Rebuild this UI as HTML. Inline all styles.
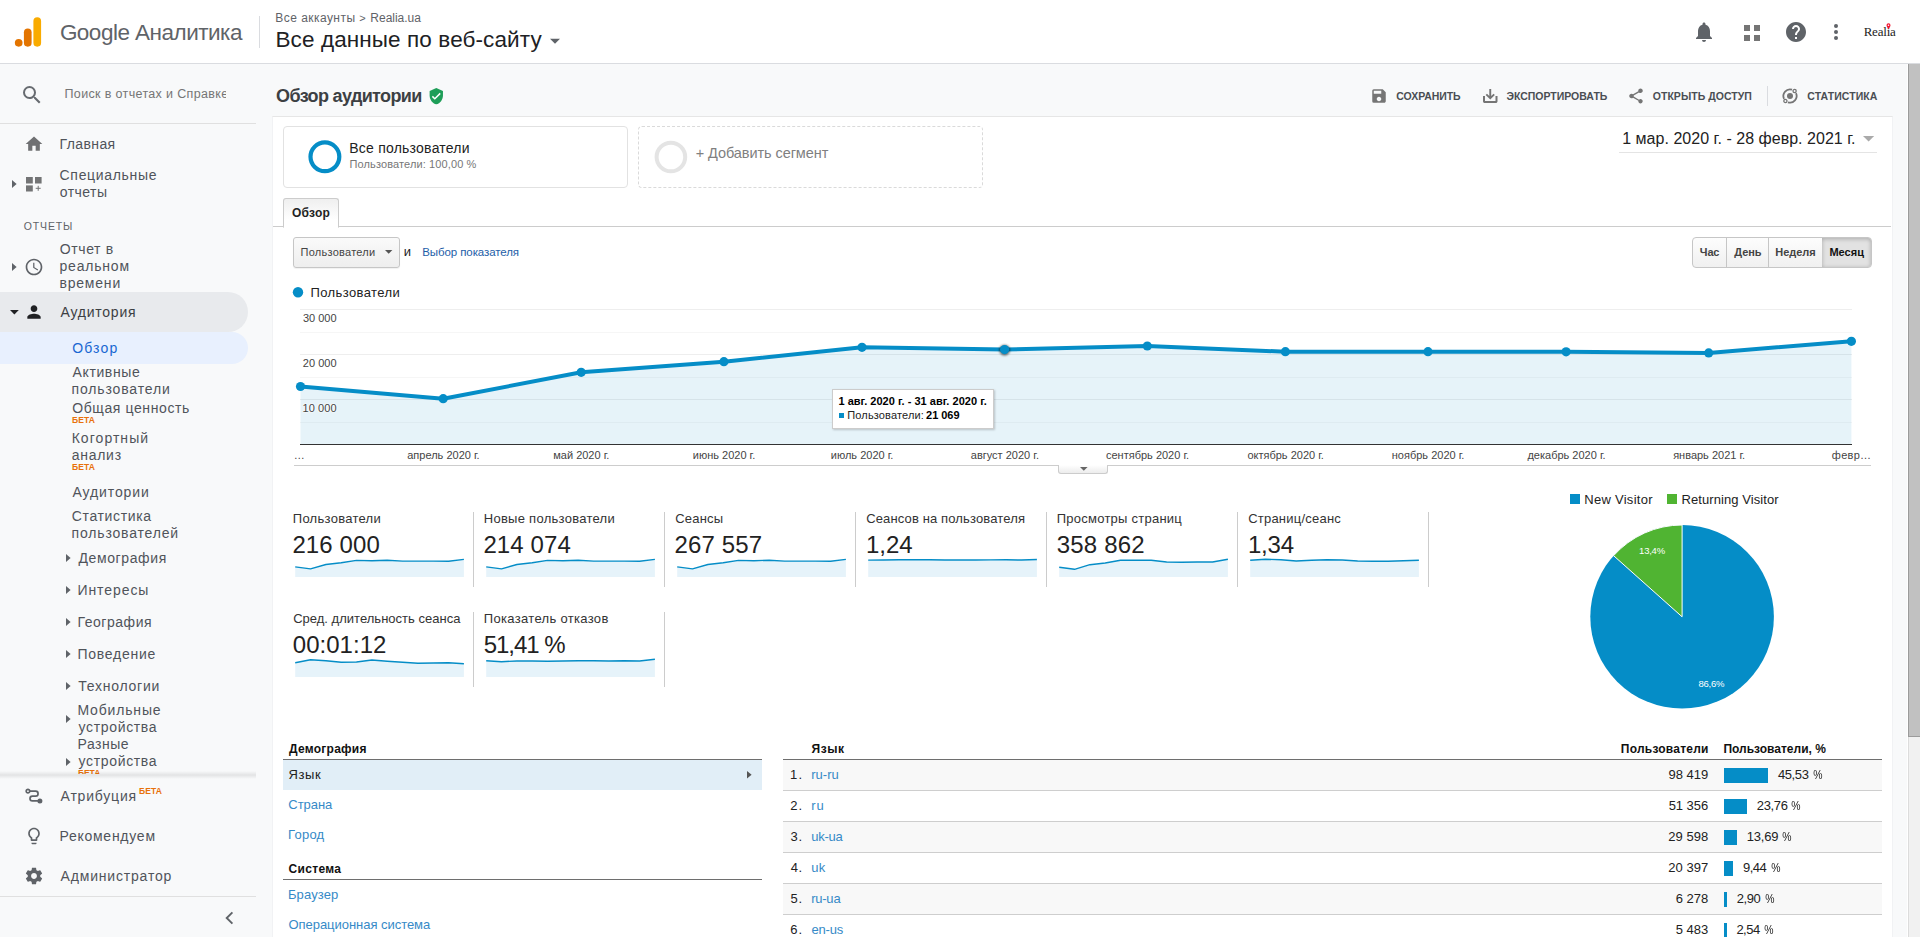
<!DOCTYPE html>
<html lang="ru">
<head>
<meta charset="utf-8">
<title>Обзор аудитории – Google Аналитика</title>
<style>
html,body{margin:0;padding:0;}
body{width:1920px;height:937px;overflow:hidden;position:relative;background:#f8f9fa;font-family:"Liberation Sans",sans-serif;color:#222;font-size:12px;}
.abs,.t{position:absolute;white-space:nowrap;}
.t{line-height:1;}
svg{position:absolute;overflow:visible;}
#hdr{position:absolute;left:0;top:0;width:1920px;height:63px;background:#fff;border-bottom:1px solid #dadce0;}
#panel{position:absolute;left:272px;top:116px;width:1621px;height:830px;background:#fff;border:1px solid #f1f2f4;border-top-color:#e6e6e6;box-sizing:border-box;}
#sbar{position:absolute;left:1907px;top:64px;width:13px;height:873px;background:#f1f1f1;border-left:1px solid #fff;box-shadow:inset 1px 0 0 #dcdcdc;box-sizing:border-box;}
#sthumb{position:absolute;left:1908px;top:64px;width:12px;height:673px;background:#c1c1c1;border-left:1px solid #9b9b9b;border-bottom:1px solid #9b9b9b;box-sizing:border-box;}
</style>
</head>
<body>
<div id="hdr"></div>
<div id="panel"></div>
<div id="sbar"></div><div id="sthumb"></div>
<!-- sec_header -->
<svg style="left:0px;top:0px;" width="60" height="63" viewBox="0 0 60 63"><circle cx="18.7" cy="42.8" r="3.85" fill="#e37400"/><rect x="23.9" y="28.4" width="7.7" height="18.3" rx="3.85" fill="#e37400"/><rect x="33.4" y="17.2" width="7.7" height="29.5" rx="3.85" fill="#f9ab00"/></svg>
<div class="t" id="gname" style="left:59.88px;top:22.00px;font-size:22.5px;letter-spacing:-0.508px;color:#5f6368;">Google Аналитика</div>
<div class="abs" style="left:259px;top:16px;width:1px;height:32px;background:#dadce0;"></div>
<div class="t" id="crumb" style="left:275.34px;top:12.00px;font-size:12px;letter-spacing:0.449px;color:#5f6368;">Все аккаунты</div>
<div class="t" id="crumbsep" style="left:359.31px;top:13.00px;font-size:11px;color:#5f6368;">&gt;</div>
<div class="t" id="crumb2" style="left:370.34px;top:12.00px;font-size:12px;letter-spacing:-0.012px;color:#5f6368;">Realia.ua</div>
<div class="t" id="prop" style="left:275.50px;top:29.00px;font-size:22.5px;letter-spacing:0.103px;color:#202124;">Все данные по веб-сайту</div>
<svg style="left:548.5px;top:37.6px;" width="12" height="6" viewBox="0 0 12 6"><path d="M1 .8h10L6 5.8z" fill="#5f6368"/></svg>
<svg style="left:1692px;top:20px;" width="24" height="24" viewBox="0 0 24 24"><path fill="#5f6368" d="M12 22c1.1 0 2-.9 2-2h-4a2 2 0 0 0 2 2zm6-6v-5c0-3.07-1.64-5.64-4.5-6.32V4c0-.83-.67-1.5-1.5-1.5S10.5 3.17 10.5 4v.68C7.63 5.36 6 7.92 6 11v5l-2 2v1h16v-1l-2-2z"/></svg>
<svg style="left:1744px;top:25px;" width="16" height="16" viewBox="0 0 16 16"><g fill="#757575"><rect x="0" y="0" width="6" height="6"/><rect x="10" y="0" width="6" height="6"/><rect x="0" y="10" width="6" height="6"/><rect x="10" y="10" width="6" height="6"/></g></svg>
<svg style="left:1784px;top:20px;" width="24" height="24" viewBox="0 0 24 24"><path fill="#5f6368" d="M12 2C6.48 2 2 6.48 2 12s4.48 10 10 10 10-4.48 10-10S17.52 2 12 2zm1 17h-2v-2h2v2zm2.07-7.750l-.9.92C13.45 12.9 13 13.5 13 15h-2v-.5c0-1.1.45-2.1 1.17-2.83l1.240-1.260c.37-.36.59-.86.59-1.410 0-1.1-.9-2-2-2s-2 .9-2 2H8c0-2.210 1.790-4 4-4s4 1.790 4 4c0 .88-.36 1.680-.93 2.250z"/></svg>
<svg style="left:1824px;top:20px;" width="24" height="24" viewBox="0 0 24 24"><g fill="#5f6368"><circle cx="12" cy="6" r="2"/><circle cx="12" cy="12" r="2"/><circle cx="12" cy="18" r="2"/></g></svg>
<div class="t" id="realia" style="left:1863.67px;top:25.00px;font-size:13px;letter-spacing:-0.212px;color:#222;font-family:'Liberation Serif',serif;">Realia</div>
<svg style="left:1886px;top:23.3px;" width="5" height="7" viewBox="0 0 5 7"><path d="M2.5 .3a2 2 0 0 1 2 2c0 1.4-2 3.8-2 3.8s-2-2.4-2-3.8a2 2 0 0 1 2-2z" fill="#f0142f"/><circle cx="2.5" cy="2.3" r=".8" fill="#fff"/></svg>
<!-- sec_side -->
<svg style="left:20px;top:83px;" width="24" height="24" viewBox="0 0 24 24"><path fill="#676b70" d="M15.5 14h-.79l-.28-.27A6.471 6.471 0 0 0 16 9.5 6.5 6.5 0 1 0 9.5 16c1.610 0 3.090-.59 4.230-1.570l.27.28v.79l5 4.990L20.490 19l-4.990-5zm-6 0C7.010 14 5 11.990 5 9.500S7.010 5 9.500 5 14 7.010 14 9.500 11.990 14 9.500 14z"/></svg>
<div class="abs" style="left:60px;top:80px;width:165.7px;height:26px;overflow:hidden;"><div class="t" id="srch" style="left:4.50px;top:8.00px;font-size:12.5px;letter-spacing:0.350px;color:#757575;">Поиск в отчетах и Справке</div>
</div>
<div class="abs" style="left:0px;top:123px;width:256px;height:1px;background:#e0e0e0;"></div>
<svg style="left:24px;top:134px;" width="20" height="20" viewBox="0 0 24 24"><path fill="#6f7072" d="M10 20v-6h4v6h5v-8h3L12 3 2 12h3v8z"/></svg>
<div class="t" id="n_home" style="left:59.58px;top:137.00px;font-size:14px;letter-spacing:0.377px;color:#50545a;">Главная</div>
<svg style="left:12.1px;top:180.1px;" width="5" height="8" viewBox="0 0 5 8"><path d="M0 0L4.6 4 0 8z" fill="#5f6368"/></svg>
<svg style="left:26.2px;top:176.7px;" width="16" height="15" viewBox="0 0 16 15"><g fill="#737475"><rect x="0" y="0" width="6.8" height="6.5"/><rect x="9" y="0" width="6.6" height="6.5"/><rect x="0" y="8.400" width="6.8" height="6.1"/><rect x="11.700" y="8.800" width="1" height="5"/><rect x="9.700" y="10.800" width="5" height="1"/></g></svg>
<div class="t" id="n_spec" style="left:59.60px;top:168.00px;font-size:14px;letter-spacing:0.670px;color:#50545a;">Специальные</div>
<div class="t" style="left:59.74px;top:185.00px;font-size:14px;letter-spacing:0.450px;color:#50545a;">отчеты</div>
<div class="t" style="left:23.63px;top:221.00px;font-size:10.5px;letter-spacing:0.900px;color:#5f6368;">ОТЧЕТЫ</div>
<svg style="left:12.1px;top:263.2px;" width="5" height="8" viewBox="0 0 5 8"><path d="M0 0L4.6 4 0 8z" fill="#5f6368"/></svg>
<svg style="left:24px;top:257px;" width="20" height="20" viewBox="0 0 24 24"><path fill="#5f6368" d="M11.990 2C6.470 2 2 6.480 2 12s4.470 10 9.990 10C17.520 22 22 17.520 22 12S17.520 2 11.990 2zM12 20c-4.420 0-8-3.580-8-8s3.580-8 8-8 8 3.580 8 8-3.580 8-8 8zm.5-13H11v6l5.250 3.150.75-1.230-4.500-2.670z"/></svg>
<div class="t" style="left:59.67px;top:242.00px;font-size:14px;letter-spacing:0.627px;color:#50545a;">Отчет в</div>
<div class="t" style="left:59.46px;top:259.00px;font-size:14px;letter-spacing:0.806px;color:#50545a;">реальном</div>
<div class="t" style="left:59.39px;top:276.00px;font-size:14px;letter-spacing:0.815px;color:#50545a;">времени</div>
<div class="abs" style="left:0px;top:292px;width:248px;height:40px;background:#e8eaed;border-radius:0 20px 20px 0;"></div>
<svg style="left:9.5px;top:310px;" width="9" height="4.5" viewBox="0 0 9 4.5"><path d="M0 0h8.800L4.400 4.400z" fill="#202124"/></svg>
<svg style="left:24px;top:302px;" width="20" height="20" viewBox="0 0 24 24"><path fill="#202124" d="M12 12c2.210 0 4-1.790 4-4s-1.790-4-4-4-4 1.790-4 4 1.790 4 4 4zm0 2c-2.670 0-8 1.340-8 4v2h16v-2c0-2.660-5.330-4-8-4z"/></svg>
<div class="t" style="left:60.60px;top:305.00px;font-size:14px;letter-spacing:0.754px;color:#3c4043;">Аудитория</div>
<div class="abs" style="left:0px;top:332px;width:248px;height:32px;background:#e8f0fe;border-radius:0 16px 16px 0;"></div>
<div class="t" id="n_obz" style="left:72.17px;top:341.00px;font-size:14px;letter-spacing:1.150px;color:#1967d2;">Обзор</div>
<div class="t" style="left:72.50px;top:365.00px;font-size:14px;letter-spacing:0.629px;color:#50545a;">Активные</div>
<div class="t" style="left:71.59px;top:382.00px;font-size:14px;letter-spacing:0.845px;color:#50545a;">пользователи</div>
<div class="t" style="left:72.17px;top:401.00px;font-size:14px;letter-spacing:0.609px;color:#50545a;">Общая ценность</div>
<div class="t" style="left:71.95px;top:416.00px;font-size:8.5px;letter-spacing:0.118px;color:#e8710a;font-weight:bold;">БЕТА</div>
<div class="t" style="left:71.68px;top:431.00px;font-size:14px;letter-spacing:1.045px;color:#50545a;">Когортный</div>
<div class="t" style="left:71.74px;top:448.00px;font-size:14px;letter-spacing:0.728px;color:#50545a;">анализ</div>
<div class="t" style="left:71.95px;top:463.00px;font-size:8.5px;letter-spacing:0.118px;color:#e8710a;font-weight:bold;">БЕТА</div>
<div class="t" style="left:72.50px;top:485.00px;font-size:14px;letter-spacing:0.890px;color:#50545a;">Аудитории</div>
<div class="t" style="left:71.80px;top:509.00px;font-size:14px;letter-spacing:0.637px;color:#50545a;">Статистика</div>
<div class="t" style="left:71.59px;top:526.00px;font-size:14px;letter-spacing:0.827px;color:#50545a;">пользователей</div>
<svg style="left:66.2px;top:554.1px;" width="5" height="8" viewBox="0 0 5 8"><path d="M0 0L4.6 4 0 8z" fill="#5f6368"/></svg>
<div class="t" style="left:78.53px;top:551.00px;font-size:14px;letter-spacing:0.603px;color:#50545a;">Демография</div>
<svg style="left:66.2px;top:586.1px;" width="5" height="8" viewBox="0 0 5 8"><path d="M0 0L4.6 4 0 8z" fill="#5f6368"/></svg>
<div class="t" style="left:77.48px;top:583.00px;font-size:14px;letter-spacing:0.919px;color:#50545a;">Интересы</div>
<svg style="left:66.2px;top:618.1px;" width="5" height="8" viewBox="0 0 5 8"><path d="M0 0L4.6 4 0 8z" fill="#5f6368"/></svg>
<div class="t" style="left:77.48px;top:615.00px;font-size:14px;letter-spacing:0.543px;color:#50545a;">География</div>
<svg style="left:66.2px;top:650.1px;" width="5" height="8" viewBox="0 0 5 8"><path d="M0 0L4.6 4 0 8z" fill="#5f6368"/></svg>
<div class="t" style="left:77.48px;top:647.00px;font-size:14px;letter-spacing:0.749px;color:#50545a;">Поведение</div>
<svg style="left:66.2px;top:682.1px;" width="5" height="8" viewBox="0 0 5 8"><path d="M0 0L4.6 4 0 8z" fill="#5f6368"/></svg>
<div class="t" style="left:78.32px;top:679.00px;font-size:14px;letter-spacing:0.747px;color:#50545a;">Технологии</div>
<svg style="left:66.1px;top:715.4px;" width="5" height="8" viewBox="0 0 5 8"><path d="M0 0L4.6 4 0 8z" fill="#5f6368"/></svg>
<div class="t" style="left:77.48px;top:703.00px;font-size:14px;letter-spacing:0.830px;color:#50545a;">Мобильные</div>
<div class="t" style="left:78.60px;top:720.00px;font-size:14px;letter-spacing:0.648px;color:#50545a;">устройства</div>
<div class="t" style="left:77.48px;top:737.00px;font-size:14px;letter-spacing:0.534px;color:#50545a;">Разные</div>
<svg style="left:66.1px;top:758.1px;" width="5" height="8" viewBox="0 0 5 8"><path d="M0 0L4.6 4 0 8z" fill="#5f6368"/></svg>
<div class="t" style="left:78.60px;top:754.00px;font-size:14px;letter-spacing:0.648px;color:#50545a;">устройства</div>
<div class="abs" style="left:70px;top:766px;width:60px;height:8px;overflow:hidden;"><div class="t" style="left:8.05px;top:3.00px;font-size:8.5px;letter-spacing:-0.115px;color:#e8710a;font-weight:bold;">БЕТА</div>
</div>
<div class="abs" style="left:0;top:774px;width:256px;height:163px;background:#f8f9fa;"></div>
<div class="abs" style="left:0;top:771px;width:256px;height:8px;background:linear-gradient(rgba(0,0,0,0),rgba(0,0,0,.085) 50%,rgba(0,0,0,0));"></div>
<svg style="left:24px;top:786px;" width="20" height="20" viewBox="0 0 20 20"><g fill="none" stroke="#5f6368" stroke-width="1.700"><circle cx="3.950" cy="5.200" r="1.750"/><path d="M5.800 5.200h5.800a2.450 2.450 0 0 1 0 4.900h-3.200a2.400 2.400 0 0 0 0 4.800h5" stroke-linecap="round"/></g><circle cx="15.900" cy="14.900" r="2.500" fill="#5f6368"/></svg>
<div class="t" style="left:60.60px;top:789.00px;font-size:14px;letter-spacing:0.794px;color:#50545a;">Атрибуция</div>
<div class="t" style="left:139.05px;top:787.00px;font-size:8.5px;letter-spacing:0.085px;color:#e8710a;font-weight:bold;">БЕТА</div>
<svg style="left:24px;top:826px;" width="20" height="20" viewBox="0 0 24 24"><path fill="#5f6368" d="M9 21c0 .55.45 1 1 1h4c.55 0 1-.45 1-1v-1H9v1zm3-19C8.140 2 5 5.140 5 9c0 2.380 1.190 4.470 3 5.740V17c0 .55.45 1 1 1h6c.55 0 1-.45 1-1v-2.260c1.810-1.270 3-3.360 3-5.740 0-3.860-3.140-7-7-7zm2.850 11.100l-.85.6V16h-4v-2.300l-.85-.6A4.997 4.997 0 0 1 7 9c0-2.760 2.240-5 5-5s5 2.240 5 5c0 1.630-.8 3.160-2.150 4.100z"/></svg>
<div class="t" style="left:59.48px;top:829.00px;font-size:14px;letter-spacing:0.740px;color:#50545a;">Рекомендуем</div>
<svg style="left:24px;top:866px;" width="20" height="20" viewBox="0 0 24 24"><path fill="#5f6368" d="M19.430 12.980c.04-.32.07-.64.07-.98s-.03-.66-.07-.98l2.110-1.650c.19-.15.24-.42.12-.64l-2-3.460c-.12-.22-.39-.3-.61-.22l-2.490 1c-.52-.4-1.080-.73-1.690-.98l-.38-2.650C14.460 2.180 14.250 2 14 2h-4c-.25 0-.46.18-.49.42l-.38 2.650c-.61.25-1.170.59-1.690.98l-2.490-1c-.23-.09-.49 0-.61.22l-2 3.460c-.13.22-.07.49.12.64l2.110 1.650c-.04.32-.07.65-.07.98s.03.66.07.98l-2.110 1.650c-.19.15-.24.42-.12.64l2 3.460c.12.22.39.3.61.22l2.490-1c.52.4 1.080.73 1.690.98l.38 2.650c.03.24.24.42.49.42h4c.25 0 .46-.18.490-.42l.38-2.650c.61-.25 1.170-.59 1.690-.98l2.490 1c.23.09.49 0 .61-.22l2-3.460c.12-.22.07-.49-.12-.64l-2.110-1.650zM12 15.500c-1.930 0-3.500-1.570-3.500-3.500s1.570-3.500 3.500-3.500 3.500 1.570 3.500 3.500-1.570 3.500-3.500 3.500z"/></svg>
<div class="t" style="left:60.60px;top:869.00px;font-size:14px;letter-spacing:0.812px;color:#50545a;">Администратор</div>
<div class="abs" style="left:0px;top:896px;width:256px;height:1px;background:#e0e0e0;"></div>
<svg style="left:225px;top:911px;" width="9" height="14" viewBox="0 0 9 14"><path d="M7.400 1.300L1.700 7l5.700 5.700" fill="none" stroke="#5f6368" stroke-width="1.900"/></svg>
<!-- sec_title -->
<div class="t" id="title" style="left:276.08px;top:87.00px;font-size:18px;letter-spacing:-0.641px;color:#3c4043;font-weight:bold;">Обзор аудитории</div>
<svg style="left:428.9px;top:87.6px;" width="14.6" height="16.3" viewBox="3 1 18 22"><path d="M12 1L3 5v6c0 5.550 3.840 10.740 9 12 5.160-1.260 9-6.450 9-12V5l-9-4z" fill="#1e9e58"/><path d="M10 17l-4-4 1.410-1.410L10 14.170l6.590-6.590L18 9l-8 8z" fill="#fff"/></svg>
<svg style="left:1370px;top:87px;" width="18" height="18" viewBox="0 0 24 24"><path fill="#757575" d="M17 3H5a2 2 0 0 0-2 2v14a2 2 0 0 0 2 2h14c1.100 0 2-.9 2-2V7l-4-4zm-5 16c-1.660 0-3-1.340-3-3s1.340-3 3-3 3 1.340 3 3-1.340 3-3 3zm3-10H5V5h10v4z"/></svg>
<div class="t" style="left:1396.18px;top:91.00px;font-size:10.5px;letter-spacing:-0.044px;color:#4a4e53;font-weight:bold;">СОХРАНИТЬ</div>
<svg style="left:1482.7px;top:89px;" width="14.5" height="14" viewBox="0 0 14.5 14"><g fill="none" stroke="#757575"><path d="M7.250 0v8.800M3.300 5.400l3.950 3.800 3.950-3.800" stroke-width="1.900"/><path d="M1 7v5.300a.7.700 0 0 0 .7.700h11.100a.7.700 0 0 0 .7-.7V7" stroke-width="2"/></g></svg>
<div class="t" style="left:1506.44px;top:91.00px;font-size:10.5px;letter-spacing:-0.006px;color:#4a4e53;font-weight:bold;">ЭКСПОРТИРОВАТЬ</div>
<svg style="left:1626.5px;top:86.8px;" width="18" height="18" viewBox="0 0 24 24"><path fill="#757575" d="M18 16.080c-.76 0-1.440.3-1.960.77L8.910 12.700c.05-.23.09-.46.09-.7s-.04-.47-.09-.7l7.050-4.110c.54.5 1.250.81 2.040.81 1.660 0 3-1.340 3-3s-1.340-3-3-3-3 1.340-3 3c0 .24.04.47.09.7L8.040 9.810C7.500 9.310 6.790 9 6 9c-1.660 0-3 1.340-3 3s1.340 3 3 3c.79 0 1.500-.31 2.040-.81l7.120 4.160c-.05.21-.08.43-.08.650 0 1.610 1.310 2.920 2.920 2.920 1.610 0 2.920-1.310 2.920-2.920s-1.310-2.920-2.920-2.920z"/></svg>
<div class="t" style="left:1652.78px;top:91.00px;font-size:10.5px;letter-spacing:0.035px;color:#4a4e53;font-weight:bold;">ОТКРЫТЬ ДОСТУП</div>
<div class="abs" style="left:1767px;top:86px;width:1px;height:20px;background:#dadce0;"></div>
<svg style="left:1782.3px;top:88.2px;" width="16" height="16" viewBox="0 0 16 16"><g fill="none" stroke="#757575" stroke-width="1.800"><path d="M2.020 10.790A6.600 6.600 0 0 1 10.040 1.720"/><path d="M13.980 5.210A6.600 6.600 0 0 1 5.960 14.280"/><circle cx="12.600" cy="3" r="1.600" stroke-width="1.300"/><circle cx="3.400" cy="13" r="1.600" stroke-width="1.300"/></g><circle cx="8" cy="8" r="3" fill="#757575"/></svg>
<div class="t" style="left:1807.28px;top:91.00px;font-size:10.5px;letter-spacing:0.086px;color:#4a4e53;font-weight:bold;">СТАТИСТИКА</div>
<!-- sec_seg -->
<div class="abs" style="left:283px;top:126px;width:343px;height:60px;border:1px solid #e2e2e2;border-radius:4px;background:#fff;"></div>
<svg style="left:306px;top:138px;" width="38" height="38" viewBox="0 0 38 38"><circle cx="18.900" cy="18.800" r="14.400" fill="none" stroke="#058dc7" stroke-width="4.200"/></svg>
<div class="t" id="seg1" style="left:349.28px;top:141.00px;font-size:14px;letter-spacing:0.227px;color:#222;">Все пользователи</div>
<div class="t" style="left:349.52px;top:159.00px;font-size:11px;letter-spacing:0.117px;color:#777;">Пользователи: 100,00 %</div>
<div class="abs" style="left:638px;top:126px;width:343px;height:60px;border:1px dashed #dadada;border-radius:4px;background:#fff;"></div>
<svg style="left:652px;top:138px;" width="38" height="38" viewBox="0 0 38 38"><circle cx="18.900" cy="19" r="14.300" fill="none" stroke="#e4e4e4" stroke-width="4"/></svg>
<div class="t" style="left:695.75px;top:146.00px;font-size:14.5px;letter-spacing:-0.079px;color:#808080;">+ Добавить сегмент</div>
<div class="t" id="date" style="left:1622.20px;top:131.00px;font-size:16px;letter-spacing:0.025px;color:#222;">1 мар. 2020 г. - 28 февр. 2021 г.</div>
<svg style="left:1862.6px;top:136.2px;" width="11.2" height="5.6" viewBox="0 0 11.2 5.6"><path d="M0 0h11.200L5.600 5.600z" fill="#aaa"/></svg>
<div class="abs" style="left:1619px;top:151.5px;width:258px;height:1.5px;background:#e4e4e4;"></div>
<!-- sec_chart -->
<div class="abs" style="left:273px;top:226px;width:1618px;height:1px;background:#ccc;"></div>
<div class="abs" style="left:283px;top:198px;width:54px;height:28px;border:1px solid #ccc;border-bottom:1px solid #fff;border-radius:3px 3px 0 0;background:linear-gradient(#efefef,#fff 75%);"></div>
<div class="t" id="tab" style="left:291.92px;top:207.00px;font-size:12px;letter-spacing:0.265px;color:#222;font-weight:bold;">Обзор</div>
<div class="abs" style="left:293px;top:237px;width:105px;height:29px;border:1px solid #c6c6c6;border-radius:3px;background:linear-gradient(#fafafa,#eee);box-shadow:0 1px 1px rgba(0,0,0,.06);"></div>
<div class="t" id="dd" style="left:300.52px;top:247.00px;font-size:11px;letter-spacing:0.256px;color:#444;">Пользователи</div>
<svg style="left:385px;top:250.3px;" width="7.4" height="3.8" viewBox="0 0 7.4 3.8"><path d="M0 0h7.400L3.700 3.800z" fill="#555"/></svg>
<div class="t" style="left:403.75px;top:245.00px;font-size:13px;color:#222;">и</div>
<div class="t" id="pick" style="left:422.28px;top:247.00px;font-size:11.5px;letter-spacing:-0.092px;color:#1d5ea8;">Выбор показателя</div>
<div class="abs" style="left:1692px;top:237px;width:178px;height:29px;border:1px solid #c6c6c6;border-radius:4px;background:linear-gradient(#fdfdfd,#f0f0f0);"></div>
<div class="abs" style="left:1822px;top:238px;width:49px;height:29px;border-radius:0 3px 3px 0;background:#e2e2e2;box-shadow:inset 0 1px 4px rgba(0,0,0,.25);"></div>
<div class="abs" style="left:1726px;top:238px;width:1px;height:29px;background:#c6c6c6;"></div>
<div class="abs" style="left:1768px;top:238px;width:1px;height:29px;background:#c6c6c6;"></div>
<div class="t" style="left:1699.85px;top:247.00px;font-size:11px;letter-spacing:-0.170px;color:#444;font-weight:bold;">Час</div>
<div class="t" style="left:1734.35px;top:247.00px;font-size:11px;letter-spacing:-0.135px;color:#444;font-weight:bold;">День</div>
<div class="t" style="left:1775.19px;top:247.00px;font-size:11px;color:#444;font-weight:bold;">Неделя</div>
<div class="t" style="left:1829.38px;top:247.00px;font-size:11px;letter-spacing:0.035px;color:#111;font-weight:bold;">Месяц</div>
<svg style="left:292px;top:286px;" width="12" height="12" viewBox="0 0 12 12"><circle cx="6" cy="6.200" r="5.200" fill="#058dc7"/></svg>
<div class="t" id="leg" style="left:310.56px;top:286.00px;font-size:13px;letter-spacing:0.387px;color:#222;">Пользователи</div>
<svg style="left:0px;top:0px;" width="1920" height="480" viewBox="0 0 1920 480"><defs><filter id="blr" x="-50%" y="-50%" width="200%" height="200%"><feGaussianBlur stdDeviation="1"/></filter></defs><rect x="300" y="309" width="1552" height="1" fill="#eeeeee"/><rect x="300" y="332" width="1552" height="1" fill="#f6f6f6"/><rect x="300" y="354" width="1552" height="1" fill="#eeeeee"/><rect x="300" y="377" width="1552" height="1" fill="#f6f6f6"/><rect x="300" y="399" width="1552" height="1" fill="#eeeeee"/><rect x="300" y="422" width="1552" height="1" fill="#f6f6f6"/><polygon points="300.5,386.5 443.2,398.7 581.2,372.3 723.9,361.7 862,347.3 1004.6,349.6 1147.3,346 1285.4,351.7 1428,351.7 1566.1,351.8 1708.7,352.9 1851.4,341.3 1851.4,444.500 300.5,444.500" fill="#058dc7" fill-opacity=".1"/><rect x="300" y="444" width="1552" height="1" fill="#333"/><polyline points="300.5,386.5 443.2,398.7 581.2,372.3 723.9,361.7 862,347.3 1004.6,349.6 1147.3,346 1285.4,351.7 1428,351.7 1566.1,351.8 1708.7,352.9 1851.4,341.3" fill="none" stroke="#058dc7" stroke-width="4" stroke-linejoin="round"/><circle cx="300.5" cy="386.5" r="4.600" fill="#058dc7"/><circle cx="443.2" cy="398.7" r="4.600" fill="#058dc7"/><circle cx="581.2" cy="372.3" r="4.600" fill="#058dc7"/><circle cx="723.9" cy="361.7" r="4.600" fill="#058dc7"/><circle cx="862" cy="347.3" r="4.600" fill="#058dc7"/><circle cx="1004.6" cy="350.1" r="5.400" fill="#000" fill-opacity=".55" filter="url(#blr)"/><circle cx="1004.6" cy="349.6" r="4.600" fill="#058dc7"/><circle cx="1147.3" cy="346" r="4.600" fill="#058dc7"/><circle cx="1285.4" cy="351.7" r="4.600" fill="#058dc7"/><circle cx="1428" cy="351.7" r="4.600" fill="#058dc7"/><circle cx="1566.1" cy="351.8" r="4.600" fill="#058dc7"/><circle cx="1708.7" cy="352.9" r="4.600" fill="#058dc7"/><circle cx="1851.4" cy="341.3" r="4.600" fill="#058dc7"/></svg>
<div class="t" style="left:302.92px;top:313.00px;font-size:11px;color:#444;text-shadow:0 0 2px #fff,0 0 2px #fff,0 0 2px #fff;">30 000</div>
<div class="t" style="left:302.75px;top:358.00px;font-size:11px;letter-spacing:0.035px;color:#444;text-shadow:0 0 2px #fff,0 0 2px #fff,0 0 2px #fff;">20 000</div>
<div class="t" style="left:302.48px;top:403.00px;font-size:11px;letter-spacing:0.090px;color:#444;text-shadow:0 0 2px #fff,0 0 2px #fff,0 0 2px #fff;">10 000</div>
<div class="t" style="left:293.81px;top:450.00px;font-size:11px;color:#444;">…</div>
<div class="t" id="xl1" style="left:407.26px;top:450.00px;font-size:11px;color:#444;">апрель 2020 г.</div>
<div class="t" id="xl2" style="left:553.26px;top:450.00px;font-size:11px;color:#444;">май 2020 г.</div>
<div class="t" id="xl3" style="left:692.77px;top:450.00px;font-size:11px;color:#444;">июнь 2020 г.</div>
<div class="t" id="xl4" style="left:830.81px;top:450.00px;font-size:11px;color:#444;">июль 2020 г.</div>
<div class="t" id="xl5" style="left:970.77px;top:450.00px;font-size:11px;color:#444;">август 2020 г.</div>
<div class="t" id="xl6" style="left:1105.99px;top:450.00px;font-size:11px;color:#444;">сентябрь 2020 г.</div>
<div class="t" id="xl7" style="left:1247.42px;top:450.00px;font-size:11px;color:#444;">октябрь 2020 г.</div>
<div class="t" id="xl8" style="left:1391.81px;top:450.00px;font-size:11px;color:#444;">ноябрь 2020 г.</div>
<div class="t" id="xl9" style="left:1527.46px;top:450.00px;font-size:11px;color:#444;">декабрь 2020 г.</div>
<div class="t" id="xl10" style="left:1673.14px;top:450.00px;font-size:11px;color:#444;">январь 2021 г.</div>
<div class="t" style="left:1831.86px;top:450.00px;font-size:11px;letter-spacing:0.252px;color:#444;">февр…</div>
<div class="abs" style="left:294px;top:465px;width:1577px;height:1px;background:#cdcdcd;"></div>
<div class="abs" style="left:1058px;top:465px;width:48px;height:8px;border:1px solid #ccc;border-top:none;border-radius:0 0 3px 3px;background:linear-gradient(#fff,#ececec);"></div>
<svg style="left:1079.8px;top:467px;" width="7.6" height="3.8" viewBox="0 0 7.6 3.8"><path d="M0 0h7.600L3.800 3.800z" fill="#666"/></svg>
<div class="abs" style="left:832px;top:389px;width:160px;height:38px;border:1px solid #ccc;background:#fff;box-shadow:1px 1px 2px rgba(0,0,0,.2);"></div>
<div class="t" id="tt1" style="left:838.44px;top:396.00px;font-size:11px;letter-spacing:0.032px;color:#000;font-weight:bold;">1 авг. 2020 г. - 31 авг. 2020 г.</div>
<div class="abs" style="left:839px;top:413px;width:5px;height:5px;background:#058dc7;"></div>
<div class="t" style="left:847.32px;top:410.00px;font-size:11px;letter-spacing:0.135px;color:#222;">Пользователи:</div>
<div class="t" style="left:926.07px;top:410.00px;font-size:11px;letter-spacing:-0.029px;color:#000;font-weight:bold;">21 069</div>
<!-- sec_metrics -->
<div class="t" style="left:292.76px;top:512.00px;font-size:13px;letter-spacing:0.287px;color:#333;">Пользователи</div>
<div class="t" style="left:292.40px;top:533.00px;font-size:24px;letter-spacing:0.130px;color:#222;">216 000</div>
<div class="abs" style="left:473px;top:512px;width:1px;height:75px;background:#ccc;"></div>
<div class="t" style="left:483.76px;top:512.00px;font-size:13px;letter-spacing:0.274px;color:#333;">Новые пользователи</div>
<div class="t" style="left:483.40px;top:533.00px;font-size:24px;letter-spacing:0.123px;color:#222;">214 074</div>
<div class="abs" style="left:664px;top:512px;width:1px;height:75px;background:#ccc;"></div>
<div class="t" style="left:675.15px;top:512.00px;font-size:13px;letter-spacing:0.219px;color:#333;">Сеансы</div>
<div class="t" style="left:674.40px;top:533.00px;font-size:24px;letter-spacing:0.153px;color:#222;">267 557</div>
<div class="abs" style="left:855px;top:512px;width:1px;height:75px;background:#ccc;"></div>
<div class="t" style="left:866.15px;top:512.00px;font-size:13px;letter-spacing:0.139px;color:#333;">Сеансов на пользователя</div>
<div class="t" style="left:865.90px;top:533.00px;font-size:24px;letter-spacing:0.007px;color:#222;">1,24</div>
<div class="abs" style="left:1046px;top:512px;width:1px;height:75px;background:#ccc;"></div>
<div class="t" style="left:1056.76px;top:512.00px;font-size:13px;letter-spacing:0.244px;color:#333;">Просмотры страниц</div>
<div class="t" style="left:1056.76px;top:533.00px;font-size:24px;letter-spacing:0.193px;color:#222;">358 862</div>
<div class="abs" style="left:1237px;top:512px;width:1px;height:75px;background:#ccc;"></div>
<div class="t" style="left:1248.15px;top:512.00px;font-size:13px;letter-spacing:0.226px;color:#333;">Страниц/сеанс</div>
<div class="t" style="left:1247.90px;top:533.00px;font-size:24px;letter-spacing:-0.193px;color:#222;">1,34</div>
<div class="abs" style="left:1428px;top:512px;width:1px;height:75px;background:#ccc;"></div>
<div class="t" style="left:293.15px;top:612.00px;font-size:13px;letter-spacing:0.018px;color:#333;">Сред. длительность сеанса</div>
<div class="t" style="left:292.76px;top:633.00px;font-size:24px;letter-spacing:0.037px;color:#222;">00:01:12</div>
<div class="abs" style="left:473px;top:612px;width:1px;height:75px;background:#ccc;"></div>
<div class="t" style="left:483.76px;top:612.00px;font-size:13px;letter-spacing:0.326px;color:#333;">Показатель отказов</div>
<div class="t" style="left:483.64px;top:633.00px;font-size:24px;letter-spacing:-0.997px;color:#222;">51,41 %</div>
<div class="abs" style="left:664px;top:612px;width:1px;height:75px;background:#ccc;"></div>
<svg style="left:0px;top:0px;" width="1920" height="700" viewBox="0 0 1920 700"><polygon points="295.2,566.9 310.5,568.9 325.9,564.5 341.2,562.8 356.5,560.4 371.9,560.8 387.2,560.2 402.6,561.1 417.9,561.1 433.2,561.1 448.6,561.3 463.9,559.4 463.9,577 295.2,577" fill="#e6f3fa"/><polyline points="295.2,566.9 310.5,568.9 325.9,564.5 341.2,562.8 356.5,560.4 371.9,560.8 387.2,560.2 402.6,561.1 417.9,561.1 433.2,561.1 448.6,561.3 463.9,559.4" fill="none" stroke="#058dc7" stroke-width="1.400" stroke-linejoin="round"/><polygon points="486.2,566.9 501.5,568.9 516.9,564.5 532.2,562.8 547.5,560.4 562.9,560.8 578.2,560.2 593.6,561.1 608.9,561.1 624.2,561.1 639.6,561.3 654.9,559.4 654.9,577 486.2,577" fill="#e6f3fa"/><polyline points="486.2,566.9 501.5,568.9 516.9,564.5 532.2,562.8 547.5,560.4 562.9,560.8 578.2,560.2 593.6,561.1 608.9,561.1 624.2,561.1 639.6,561.3 654.9,559.4" fill="none" stroke="#058dc7" stroke-width="1.400" stroke-linejoin="round"/><polygon points="677.2,566.9 692.5,568.9 707.9,564.5 723.2,562.8 738.5,560.4 753.9,560.8 769.2,560.2 784.6,561.1 799.9,561.1 815.2,561.1 830.6,561.3 845.9,559.4 845.9,577 677.2,577" fill="#e6f3fa"/><polyline points="677.2,566.9 692.5,568.9 707.9,564.5 723.2,562.8 738.5,560.4 753.9,560.8 769.2,560.2 784.6,561.1 799.9,561.1 815.2,561.1 830.6,561.3 845.9,559.4" fill="none" stroke="#058dc7" stroke-width="1.400" stroke-linejoin="round"/><polygon points="868.2,560.1 883.5,560.0 898.9,559.8 914.2,559.7 929.5,559.8 944.9,560.0 960.2,560.0 975.6,560.0 990.9,559.9 1006.2,559.8 1021.6,560.0 1036.9,559.5 1036.9,577 868.2,577" fill="#e6f3fa"/><polyline points="868.2,560.1 883.5,560.0 898.9,559.8 914.2,559.7 929.5,559.8 944.9,560.0 960.2,560.0 975.6,560.0 990.9,559.9 1006.2,559.8 1021.6,560.0 1036.9,559.5" fill="none" stroke="#058dc7" stroke-width="1.400" stroke-linejoin="round"/><polygon points="1059.2,567.3 1074.5,569.3 1089.9,564.7 1105.2,563.0 1120.5,560.3 1135.9,560.3 1151.2,560.3 1166.6,562.0 1181.9,562.3 1197.2,562.0 1212.6,562.0 1227.9,559.3 1227.9,577 1059.2,577" fill="#e6f3fa"/><polyline points="1059.2,567.3 1074.5,569.3 1089.9,564.7 1105.2,563.0 1120.5,560.3 1135.9,560.3 1151.2,560.3 1166.6,562.0 1181.9,562.3 1197.2,562.0 1212.6,562.0 1227.9,559.3" fill="none" stroke="#058dc7" stroke-width="1.400" stroke-linejoin="round"/><polygon points="1250.2,560.3 1265.5,559.3 1280.9,559.7 1296.2,561.0 1311.5,560.3 1326.9,559.7 1342.2,560.0 1357.6,561.0 1372.9,561.3 1388.2,561.3 1403.6,560.7 1418.9,560.3 1418.9,577 1250.2,577" fill="#e6f3fa"/><polyline points="1250.2,560.3 1265.5,559.3 1280.9,559.7 1296.2,561.0 1311.5,560.3 1326.9,559.7 1342.2,560.0 1357.6,561.0 1372.9,561.3 1388.2,561.3 1403.6,560.7 1418.9,560.3" fill="none" stroke="#058dc7" stroke-width="1.400" stroke-linejoin="round"/><polygon points="295.2,662.7 310.5,659.7 325.9,660.7 341.2,662.3 356.5,662.0 371.9,660.0 387.2,661.3 402.6,662.3 417.9,663.3 433.2,663.0 448.6,662.7 463.9,663.7 463.9,677 295.2,677" fill="#e6f3fa"/><polyline points="295.2,662.7 310.5,659.7 325.9,660.7 341.2,662.3 356.5,662.0 371.9,660.0 387.2,661.3 402.6,662.3 417.9,663.3 433.2,663.0 448.6,662.7 463.9,663.7" fill="none" stroke="#058dc7" stroke-width="1.400" stroke-linejoin="round"/><polygon points="486.2,660.7 501.5,661.7 516.9,661.0 532.2,661.0 547.5,661.3 562.9,661.0 578.2,660.7 593.6,660.7 608.9,661.0 624.2,660.7 639.6,661.0 654.9,659.3 654.9,677 486.2,677" fill="#e6f3fa"/><polyline points="486.2,660.7 501.5,661.7 516.9,661.0 532.2,661.0 547.5,661.3 562.9,661.0 578.2,660.7 593.6,660.7 608.9,661.0 624.2,660.7 639.6,661.0 654.9,659.3" fill="none" stroke="#058dc7" stroke-width="1.400" stroke-linejoin="round"/></svg>
<!-- sec_pie -->
<div class="abs" style="left:1570px;top:494px;width:10px;height:10px;background:#058dc7;"></div>
<div class="t" id="nv" style="left:1584.36px;top:493.00px;font-size:13px;letter-spacing:0.262px;color:#222;">New Visitor</div>
<div class="abs" style="left:1667px;top:494px;width:10px;height:10px;background:#50b432;"></div>
<div class="t" style="left:1681.46px;top:493.00px;font-size:13px;letter-spacing:0.085px;color:#222;">Returning Visitor</div>
<svg style="left:0px;top:0px;" width="1920" height="720" viewBox="0 0 1920 720"><circle cx="1682.1" cy="616.8" r="91.8" fill="#058dc7"/><path d="M1682.1 616.8L1682.1 525A91.8 91.8 0 0 0 1613.62 555.66Z" fill="#50b432" stroke="#fff" stroke-width="1" stroke-linejoin="round"/></svg>
<div class="t" style="left:1639.09px;top:546.00px;font-size:9.5px;letter-spacing:-0.222px;color:#fff;">13,4%</div>
<div class="t" style="left:1698.52px;top:679.00px;font-size:9.5px;letter-spacing:-0.255px;color:#fff;">86,6%</div>
<!-- sec_tables -->
<div class="t" id="demo" style="left:288.94px;top:743.00px;font-size:12px;letter-spacing:0.269px;color:#111;font-weight:bold;">Демография</div>
<div class="abs" style="left:283px;top:759px;width:479px;height:1px;background:#6e6e6e;"></div>
<div class="abs" style="left:283px;top:760px;width:479px;height:30px;background:#e1eef7;"></div>
<div class="t" style="left:288.42px;top:768.00px;font-size:13px;letter-spacing:0.600px;color:#222;">Язык</div>
<svg style="left:746.7px;top:770.7px;" width="4.6" height="7.6" viewBox="0 0 4.6 7.6"><path d="M0 0L4.600 3.800 0 7.600z" fill="#555"/></svg>
<div class="t" style="left:288.35px;top:798.00px;font-size:13px;letter-spacing:-0.063px;color:#368ac7;">Страна</div>
<div class="t" style="left:287.96px;top:828.00px;font-size:13px;letter-spacing:0.268px;color:#368ac7;">Город</div>
<div class="t" style="left:288.52px;top:863.00px;font-size:12px;letter-spacing:0.317px;color:#111;font-weight:bold;">Система</div>
<div class="abs" style="left:283px;top:879px;width:479px;height:1px;background:#6e6e6e;"></div>
<div class="t" style="left:287.96px;top:888.00px;font-size:13px;letter-spacing:0.111px;color:#368ac7;">Браузер</div>
<div class="t" id="os" style="left:288.42px;top:918.00px;font-size:13px;letter-spacing:-0.035px;color:#368ac7;">Операционная система</div>
<div class="t" style="left:811.52px;top:743.00px;font-size:12px;letter-spacing:0.527px;color:#111;font-weight:bold;">Язык</div>
<div class="t" style="left:1620.82px;top:743.00px;font-size:12px;letter-spacing:0.235px;color:#111;font-weight:bold;">Пользователи</div>
<div class="t" style="left:1723.42px;top:743.00px;font-size:12px;color:#111;font-weight:bold;">Пользователи, %</div>
<div class="abs" style="left:783px;top:759px;width:1099px;height:1px;background:#6e6e6e;"></div>
<div class="abs" style="left:783px;top:760px;width:1099px;height:30px;background:#f8f8f8;"></div>
<div class="abs" style="left:783px;top:790px;width:1099px;height:1px;background:#cecece;"></div>
<div class="t" style="left:790.02px;top:768.00px;font-size:13px;letter-spacing:1.290px;color:#222;">1.</div>
<div class="t" style="left:811.15px;top:768.00px;font-size:13px;letter-spacing:0.065px;color:#368ac7;">ru-ru</div>
<div class="t" style="left:1668.41px;top:768.00px;font-size:13px;letter-spacing:0.018px;color:#222;">98 419</div>
<div class="abs" style="left:1724px;top:768px;width:43.5px;height:15px;background:#058dc7;"></div>
<div class="t" style="left:1777.96px;top:768.00px;font-size:13px;letter-spacing:-0.405px;color:#222;">45,53</div>
<div class="t" style="left:1810.70px;top:768.00px;font-size:13px;color:#222;transform:scaleX(.8);transform-origin:100% 50%;">%</div>
<div class="abs" style="left:783px;top:821px;width:1099px;height:1px;background:#cecece;"></div>
<div class="t" style="left:790.35px;top:799.00px;font-size:13px;letter-spacing:0.965px;color:#222;">2.</div>
<div class="t" style="left:811.15px;top:799.00px;font-size:13px;letter-spacing:1.120px;color:#368ac7;">ru</div>
<div class="t" style="left:1668.68px;top:799.00px;font-size:13px;letter-spacing:-0.048px;color:#222;">51 356</div>
<div class="abs" style="left:1724px;top:799px;width:23px;height:15px;background:#058dc7;"></div>
<div class="t" style="left:1756.71px;top:799.00px;font-size:13px;letter-spacing:-0.308px;color:#222;">23,76</div>
<div class="t" style="left:1789.35px;top:799.00px;font-size:13px;color:#222;transform:scaleX(.8);transform-origin:100% 50%;">%</div>
<div class="abs" style="left:783px;top:822px;width:1099px;height:30px;background:#f8f8f8;"></div>
<div class="abs" style="left:783px;top:852px;width:1099px;height:1px;background:#cecece;"></div>
<div class="t" style="left:790.54px;top:830.00px;font-size:13px;letter-spacing:0.770px;color:#222;">3.</div>
<div class="t" style="left:811.22px;top:830.00px;font-size:13px;letter-spacing:-0.271px;color:#368ac7;">uk-ua</div>
<div class="t" style="left:1668.35px;top:830.00px;font-size:13px;letter-spacing:0.018px;color:#222;">29 598</div>
<div class="abs" style="left:1724px;top:830px;width:13px;height:15px;background:#058dc7;"></div>
<div class="t" style="left:1746.74px;top:830.00px;font-size:13px;letter-spacing:-0.210px;color:#222;">13,69</div>
<div class="t" style="left:1779.90px;top:830.00px;font-size:13px;color:#222;transform:scaleX(.8);transform-origin:100% 50%;">%</div>
<div class="abs" style="left:783px;top:883px;width:1099px;height:1px;background:#cecece;"></div>
<div class="t" style="left:790.74px;top:861.00px;font-size:13px;letter-spacing:0.575px;color:#222;">4.</div>
<div class="t" style="left:811.22px;top:861.00px;font-size:13px;letter-spacing:0.300px;color:#368ac7;">uk</div>
<div class="t" style="left:1668.35px;top:861.00px;font-size:13px;letter-spacing:0.031px;color:#222;">20 397</div>
<div class="abs" style="left:1724px;top:861px;width:9px;height:15px;background:#058dc7;"></div>
<div class="t" style="left:1743.06px;top:861.00px;font-size:13px;letter-spacing:-0.525px;color:#222;">9,44</div>
<div class="t" style="left:1768.53px;top:861.00px;font-size:13px;color:#222;transform:scaleX(.8);transform-origin:100% 50%;">%</div>
<div class="abs" style="left:783px;top:884px;width:1099px;height:30px;background:#f8f8f8;"></div>
<div class="abs" style="left:783px;top:914px;width:1099px;height:1px;background:#cecece;"></div>
<div class="t" style="left:790.48px;top:892.00px;font-size:13px;letter-spacing:0.835px;color:#222;">5.</div>
<div class="t" style="left:811.15px;top:892.00px;font-size:13px;letter-spacing:-0.219px;color:#368ac7;">ru-ua</div>
<div class="t" style="left:1675.65px;top:892.00px;font-size:13px;letter-spacing:0.017px;color:#222;">6 278</div>
<div class="abs" style="left:1724px;top:892px;width:3px;height:15px;background:#058dc7;"></div>
<div class="t" style="left:1736.73px;top:892.00px;font-size:13px;letter-spacing:-0.460px;color:#222;">2,90</div>
<div class="t" style="left:1762.56px;top:892.00px;font-size:13px;color:#222;transform:scaleX(.8);transform-origin:100% 50%;">%</div>
<div class="abs" style="left:783px;top:945px;width:1099px;height:1px;background:#cecece;"></div>
<div class="t" style="left:790.35px;top:923.00px;font-size:13px;letter-spacing:0.965px;color:#222;">6.</div>
<div class="t" style="left:811.48px;top:923.00px;font-size:13px;letter-spacing:-0.206px;color:#368ac7;">en-us</div>
<div class="t" style="left:1675.78px;top:923.00px;font-size:13px;letter-spacing:-0.015px;color:#222;">5 483</div>
<div class="abs" style="left:1724px;top:923px;width:2.5px;height:15px;background:#058dc7;"></div>
<div class="t" style="left:1736.38px;top:923.00px;font-size:13px;letter-spacing:-0.503px;color:#222;">2,54</div>
<div class="t" style="left:1761.92px;top:923.00px;font-size:13px;color:#222;transform:scaleX(.8);transform-origin:100% 50%;">%</div>
</body>
</html>
